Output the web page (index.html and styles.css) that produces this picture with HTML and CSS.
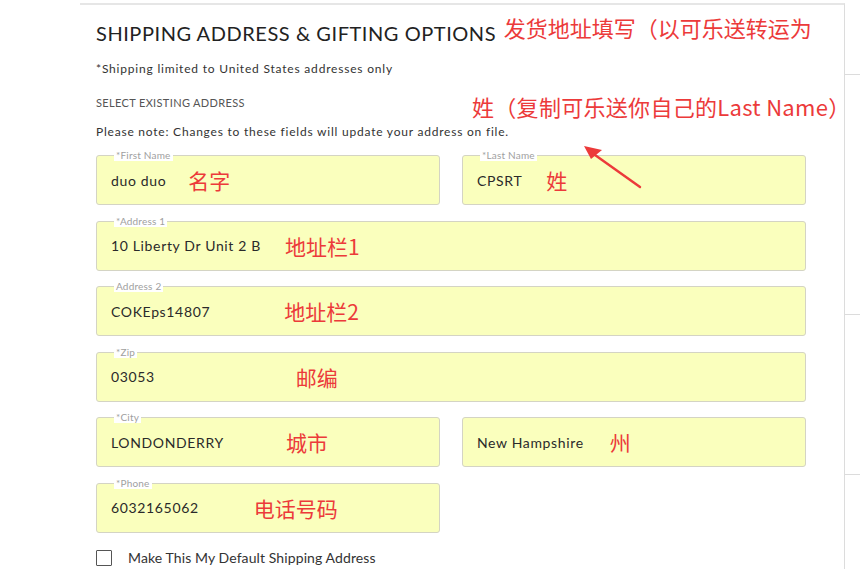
FILE: index.html
```html
<!DOCTYPE html>
<html lang="en">
<head>
    <meta charset="UTF-8">
    <meta name="viewport" content="width=device-width, initial-scale=1.0">
    <title>Shipping Address</title>
    <link rel="stylesheet" href="styles.css">
</head>
<body>

<div class="layout">
    <div class="gutter"></div>

    <!-- Shipping form -->
    <div class="main">
        <h1 class="title">SHIPPING ADDRESS &amp; GIFTING OPTIONS <span class="note note-title">发货地址填写（以可乐送转运为</span></h1>
        <p class="limit">*Shipping limited to United States addresses only</p>
        <p class="select-label">SELECT EXISTING ADDRESS</p>
        <p class="please">Please note: Changes to these fields will update your address on file.</p>

        <!-- annotation over the form -->
        <span class="note note-last">姓（复制可乐送你自己的Last Name）</span>
        <svg class="arrow" width="70" height="50" viewBox="0 0 70 50">
            <path d="M58 43 L13 11" stroke="#ec3a3a" stroke-width="2.4" stroke-linecap="round" fill="none"/>
            <path d="M2 2 L20 6 L9 15 Z" fill="#ec3a3a"/>
        </svg>

        <div class="fields">
            <div class="row">
                <div class="field half">
                    <label>*First Name</label>
                    <span class="value">duo duo</span>
                    <span class="note tag-first">名字</span>
                </div>
                <div class="field half">
                    <label>*Last Name</label>
                    <span class="value">CPSRT</span>
                    <span class="note tag-last">姓</span>
                </div>
            </div>
            <div class="row">
                <div class="field">
                    <label>*Address 1</label>
                    <span class="value">10 Liberty Dr Unit 2 B</span>
                    <span class="note tag-addr1">地址栏1</span>
                </div>
            </div>
            <div class="row">
                <div class="field">
                    <label>Address 2</label>
                    <span class="value">COKEps14807</span>
                    <span class="note tag-addr2">地址栏2</span>
                </div>
            </div>
            <div class="row">
                <div class="field">
                    <label>*Zip</label>
                    <span class="value">03053</span>
                    <span class="note tag-zip">邮编</span>
                </div>
            </div>
            <div class="row">
                <div class="field half">
                    <label>*City</label>
                    <span class="value">LONDONDERRY</span>
                    <span class="note tag-city">城市</span>
                </div>
                <div class="field half">
                    <span class="value">New Hampshire</span>
                    <span class="note tag-state">州</span>
                </div>
            </div>
            <div class="row">
                <div class="field half">
                    <label>*Phone</label>
                    <span class="value">6032165062</span>
                    <span class="note tag-phone">电话号码</span>
                </div>
            </div>
        </div>

        <div class="check-row">
            <span class="checkbox"></span>
            <span class="check-text">Make This My Default Shipping Address</span>
        </div>
    </div>

    <!-- Sidebar edge -->
    <div class="aside">
        <div class="aside-block a1"></div>
        <div class="aside-block a2"></div>
        <div class="aside-block a3"></div>
    </div>
</div>

</body>
</html>
```

FILE: styles.css
```css
body {
    margin: 0;
    padding: 0;
    font-family: Lato, "Liberation Sans", sans-serif;
    background-color: #fff;
    color: #333;
    overflow: hidden;
}

.layout {
    display: flex;
    height: 569px;
}

.gutter {
    width: 80px;
    flex-shrink: 0;
}

/* Main form column */
.main {
    position: relative;
    width: 748px;
    flex-shrink: 0;
    margin-top: 3px;
    padding: 0 0 0 16px;
    border-top: 2px solid #e6e6e6;
    border-right: 1px solid #dcdcdc;
}

.title {
    margin: 14px 0 0;
    font-size: 20px;
    line-height: 24px;
    font-weight: normal;
    letter-spacing: 0.55px;
    color: #222;
    white-space: nowrap;
}

.note {
    font-family: "Noto Sans CJK SC", sans-serif;
    color: #ec3a3a;
    font-size: 21px;
    letter-spacing: 0;
}

.note-title {
    font-size: 22px;
    margin-left: 2px;
    position: relative;
    top: -4px;
}

.limit {
    margin: 16px 0 0;
    font-size: 12px;
    line-height: 16px;
    letter-spacing: 0.8px;
}

.select-label {
    margin: 19px 0 0;
    font-size: 11px;
    line-height: 14px;
    color: #555;
    letter-spacing: 0.35px;
}

.please {
    margin: 14px 0 0;
    font-size: 12px;
    line-height: 16px;
    letter-spacing: 0.78px;
}

.note-last {
    position: absolute;
    left: 392px;
    top: 87px;
    font-size: 22px;
    letter-spacing: 0.3px;
    line-height: 28px;
    white-space: nowrap;
}

.arrow {
    position: absolute;
    left: 502px;
    top: 139px;
    z-index: 2;
}

/* Fields */
.fields {
    margin-top: 15px;
    display: flex;
    flex-direction: column;
    gap: 15.5px;
}

.row {
    display: flex;
    gap: 22px;
}

.field {
    position: relative;
    box-sizing: border-box;
    width: 710px;
    height: 50px;
    padding: 0 14px;
    display: flex;
    align-items: center;
    background-color: #faffbd;
    border: 1px solid #d4d4c4;
    border-radius: 3px;
}

.field.half {
    width: 344px;
}

.field label {
    position: absolute;
    left: 17px;
    top: -7px;
    padding: 0 2px;
    font-size: 10px;
    line-height: 12px;
    color: #a0a0a0;
    background: #fff;
    letter-spacing: 0.2px;
}

.value {
    font-size: 14px;
    letter-spacing: 0.65px;
    color: #2a2a2a;
    white-space: nowrap;
}

.tag-first { margin-left: 22px; }
.tag-last { margin-left: 24px; }
.tag-addr1 { margin-left: 24px; }
.tag-addr2 { margin-left: 74px; }
.tag-zip { margin-left: 141px; }
.tag-city { margin-left: 62px; }
.tag-state { margin-left: 26px; }
.tag-phone { margin-left: 55px; }

/* Default address checkbox */
.check-row {
    margin-top: 16.5px;
    display: flex;
    align-items: center;
    gap: 16px;
}

.checkbox {
    box-sizing: border-box;
    width: 16px;
    height: 16px;
    border: 1px solid #555;
    border-radius: 1px;
}

.check-text {
    font-size: 14px;
    letter-spacing: 0.1px;
}

/* Right edge */
.aside {
    flex: 1;
    display: flex;
    flex-direction: column;
}

.aside-block {
    border-bottom: 1px solid #dcdcdc;
}

.a1 { height: 74px; }
.a2 { height: 239px; }
.a3 { height: 159px; }
```
